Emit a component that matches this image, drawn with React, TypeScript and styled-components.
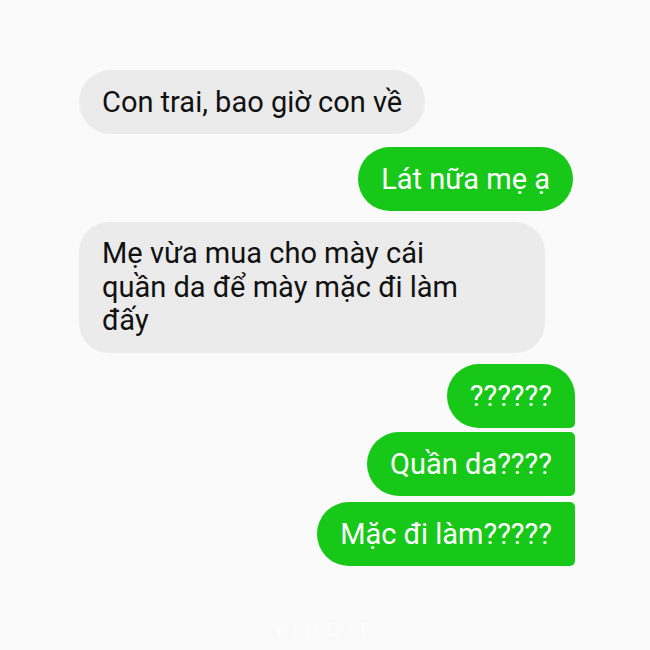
import React from "react";
import styled, { createGlobalStyle, css } from "styled-components";

const Global = createGlobalStyle`
  html, body { margin: 0; padding: 0; background: #fafafa; }
  #root { width: 650px; height: 650px; }
`;

const Page = styled.div`
  width: 650px;
  height: 650px;
  box-sizing: border-box;
  padding: 70px 75px 0 79px;
  background: #fafafa;
  font-family: Roboto, "Noto Sans", sans-serif;
  display: flex;
  flex-direction: column;
  position: relative;
`;

const Row = styled.div<{ $mine?: boolean; $gap: number }>`
  display: flex;
  justify-content: ${(p) => (p.$mine ? "flex-end" : "flex-start")};
  margin-top: ${(p) => p.$gap}px;
`;

type Shape = "pill" | "first" | "middle" | "last";

const Bubble = styled.div<{ $mine?: boolean; $shape?: Shape; $wide?: boolean }>`
  box-sizing: border-box;
  padding: 15px 23px 15px 23px;
  font-size: 29px;
  line-height: 34px;
  background: ${(p) => (p.$mine ? "#17c818" : "#ebebeb")};
  color: ${(p) => (p.$mine ? "#ffffff" : "#111111")};
  border-radius: 32px;
  ${(p) =>
    p.$shape === "first" &&
    css`
      border-radius: 32px 32px 5px 32px;
    `}
  ${(p) =>
    (p.$shape === "middle" || p.$shape === "last") &&
    css`
      border-radius: 32px 5px 5px 32px;
    `}
  ${(p) =>
    p.$wide &&
    css`
      width: 466px;
      padding: 15px 70px 15px 23px;
      line-height: 33.5px;
      border-radius: 30px;
    `}
`;

const Watermark = styled.div`
  position: absolute;
  left: 274px;
  top: 620px;
  font-family: "DejaVu Sans", sans-serif;
  font-size: 17px;
  letter-spacing: 8px;
  color: #ffffff;
  font-weight: 300;
`;

export default function App() {
  return (
    <>
      <Global />
      <Page>
        <Row $gap={0}>
          <Bubble>Con trai, bao giờ con về</Bubble>
        </Row>
        <Row $mine $gap={13}>
          <Bubble $mine style={{ marginRight: 2 }}>Lát nữa mẹ ạ</Bubble>
        </Row>
        <Row $gap={11}>
          <Bubble $wide>Mẹ vừa mua cho mày cái quần da để mày mặc đi làm đấy</Bubble>
        </Row>
        <Row $mine $gap={11}>
          <Bubble $mine $shape="first">??????</Bubble>
        </Row>
        <Row $mine $gap={4}>
          <Bubble $mine $shape="middle">Quần da????</Bubble>
        </Row>
        <Row $mine $gap={6}>
          <Bubble $mine $shape="last">Mặc đi làm?????</Bubble>
        </Row>
        <Watermark>YINGIE</Watermark>
      </Page>
    </>
  );
}
